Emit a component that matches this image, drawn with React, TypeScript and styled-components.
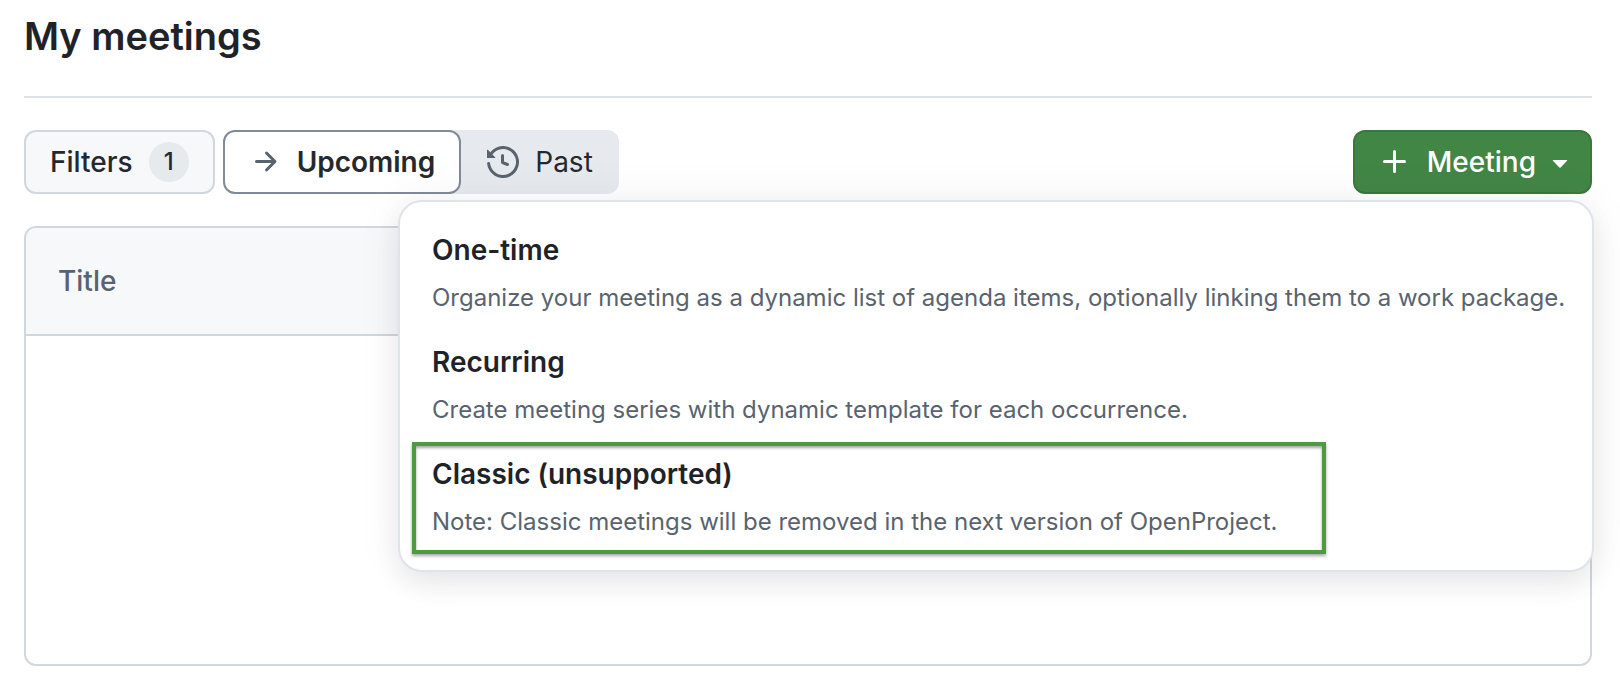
import React from "react";
import styled, { createGlobalStyle } from "styled-components";

const GlobalStyle = createGlobalStyle`
  *, *::before, *::after { box-sizing: border-box; }
  body {
    margin: 0;
    background: #ffffff;
    color: #1f2328;
    font-family: Inter, "Liberation Sans", sans-serif;
    font-size: 28px;
    line-height: 40px;
  }
`;

const Page = styled.main`
  padding: 4px 28px 32px 24px;
`;

const PageHeader = styled.header`
  padding-bottom: 28px;
  border-bottom: 2px solid #dfe3e8;
`;

const PageTitle = styled.h1`
  margin: 0;
  font-size: 38px;
  line-height: 64px;
  font-weight: 600;
`;

const Toolbar = styled.div`
  position: relative;
  display: flex;
  align-items: center;
  gap: 8px;
  padding: 32px 0;
`;

const Button = styled.button`
  display: inline-flex;
  align-items: center;
  gap: 16px;
  height: 64px;
  padding: 0 24px;
  border: 2px solid #d0d7de;
  border-radius: 12px;
  background: #f6f8fa;
  color: #25292e;
  font: inherit;
  font-weight: 500;
`;

const PrimaryButton = styled(Button)`
  margin-left: auto;
  border-color: #3b783e;
  background: #428646;
  color: #ffffff;
  gap: 8px;
  padding: 0 14px 0 24px;
`;

const ButtonLabel = styled.span`
  padding-left: 8px;
`;

const Counter = styled.span`
  width: 40px;
  height: 40px;
  border-radius: 20px;
  background: #e7eaed;
  font-size: 24px;
  text-align: center;
`;

const Segments = styled.div`
  display: flex;
  border-radius: 12px;
  background: #e6eaef;
`;

const Segment = styled.button<{ $selected?: boolean }>`
  display: inline-flex;
  align-items: center;
  gap: 16px;
  height: 64px;
  padding: 0 24px;
  border: 2px solid ${(p) => (p.$selected ? "#818b98" : "transparent")};
  border-radius: 12px;
  background: ${(p) => (p.$selected ? "#ffffff" : "transparent")};
  color: #25292e;
  font: inherit;
  font-weight: ${(p) => (p.$selected ? 600 : 400)};

  svg { color: #59636e; }
`;

const Icon = styled.svg`
  flex: none;
  width: 32px;
  height: 32px;
  fill: currentColor;
`;

const Menu = styled.ul`
  position: absolute;
  top: 102px;
  right: -2px;
  z-index: 1;
  width: 1196px;
  margin: 0;
  padding: 16px;
  list-style: none;
  border: 2px solid #dfe4ea;
  border-radius: 24px;
  background: #ffffff;
  box-shadow: 0 12px 24px rgba(37, 41, 46, 0.08), 0 0 48px rgba(37, 41, 46, 0.06);
`;

const MenuItem = styled.li`
  position: relative;
`;

const MenuAction = styled.button`
  display: flex;
  flex-direction: column;
  gap: 8px;
  width: 100%;
  padding: 12px 16px;
  border: 0;
  background: transparent;
  color: inherit;
  font: inherit;
  text-align: left;
  white-space: nowrap;
`;

const MenuLabel = styled.span`
  font-weight: 600;
`;

const MenuDescription = styled.span`
  color: #59636e;
  font-size: 24px;
`;

const Highlight = styled.span`
  position: absolute;
  inset: 0 250px 0 -4px;
  border: 4px solid #4f9a40;
  box-shadow: 0 2px 3px rgba(0, 0, 0, 0.35), inset 0 2px 3px rgba(0, 0, 0, 0.35);
  pointer-events: none;
`;

const TableBox = styled.div`
  overflow: hidden;
  border: 2px solid #d0d7de;
  border-radius: 12px;
`;

const Table = styled.table`
  width: 100%;
  border-collapse: separate;
  border-spacing: 0;
`;

const HeaderCell = styled.th`
  height: 108px;
  padding: 0 32px;
  border-bottom: 2px solid #d0d7de;
  background: #f6f8fa;
  color: #59636e;
  font-weight: 500;
  text-align: left;
`;

const EmptyRow = styled.tr`
  background: #f6f8fa;
`;

const EmptyCell = styled.td`
  height: 328px;
  padding: 0;
  border-radius: 12px;
  background: #ffffff;
`;

const paths = {
  arrow:
    "M8.22 2.97a.75.75 0 0 1 1.06 0l4.25 4.25a.75.75 0 0 1 0 1.06l-4.25 4.25a.751.751 0 0 1-1.042-.018.751.751 0 0 1-.018-1.042l2.97-2.97H3.75a.75.75 0 0 1 0-1.5h7.44L8.22 4.03a.75.75 0 0 1 0-1.06Z",
  history:
    "m.427 1.927 1.215 1.215a8.002 8.002 0 1 1-1.6 5.685.75.75 0 1 1 1.493-.154 6.5 6.5 0 1 0 1.18-4.458l1.358 1.358A.25.25 0 0 1 3.896 6H.25A.25.25 0 0 1 0 5.75V2.104a.25.25 0 0 1 .427-.177ZM7.75 4a.75.75 0 0 1 .75.75v2.992l2.028.812a.75.75 0 0 1-.557 1.392l-2.5-1A.751.751 0 0 1 7 8.25v-3.5A.75.75 0 0 1 7.75 4Z",
  plus: "M7.75 2a.75.75 0 0 1 .75.75V7h4.25a.75.75 0 0 1 0 1.5H8.5v4.25a.75.75 0 0 1-1.5 0V8.5H2.75a.75.75 0 0 1 0-1.5H7V2.75A.75.75 0 0 1 7.75 2Z",
  caret:
    "m4.427 7.427 3.396 3.396a.25.25 0 0 0 .354 0l3.396-3.396A.25.25 0 0 0 11.396 7H4.604a.25.25 0 0 0-.177.427Z",
};

function Glyph({ name }: { name: keyof typeof paths }) {
  return (
    <Icon viewBox="0 0 16 16" aria-hidden="true">
      <path d={paths[name]} />
    </Icon>
  );
}

const meetingTypes = [
  {
    label: "One-time",
    description:
      "Organize your meeting as a dynamic list of agenda items, optionally linking them to a work package.",
  },
  {
    label: "Recurring",
    description: "Create meeting series with dynamic template for each occurrence.",
  },
  {
    label: "Classic (unsupported)",
    description: "Note: Classic meetings will be removed in the next version of OpenProject.",
    highlighted: true,
  },
];

export default function App() {
  return (
    <>
      <GlobalStyle />
      <Page>
        <PageHeader>
          <PageTitle>My meetings</PageTitle>
        </PageHeader>
        <Toolbar>
          <Button type="button">
            Filters <Counter>1</Counter>
          </Button>
          <Segments>
            <Segment type="button" $selected aria-pressed="true">
              <Glyph name="arrow" />
              Upcoming
            </Segment>
            <Segment type="button" aria-pressed="false">
              <Glyph name="history" />
              Past
            </Segment>
          </Segments>
          <PrimaryButton type="button" aria-haspopup="menu" aria-expanded="true">
            <Glyph name="plus" />
            <ButtonLabel>Meeting</ButtonLabel>
            <Glyph name="caret" />
          </PrimaryButton>
          <Menu role="menu">
            {meetingTypes.map((type) => (
              <MenuItem key={type.label} role="none">
                <MenuAction type="button" role="menuitem">
                  <MenuLabel>{type.label}</MenuLabel>
                  <MenuDescription>{type.description}</MenuDescription>
                </MenuAction>
                {type.highlighted && <Highlight />}
              </MenuItem>
            ))}
          </Menu>
        </Toolbar>
        <TableBox>
          <Table>
            <thead>
              <tr>
                <HeaderCell scope="col">Title</HeaderCell>
              </tr>
            </thead>
            <tbody>
              <EmptyRow>
                <EmptyCell />
              </EmptyRow>
            </tbody>
          </Table>
        </TableBox>
      </Page>
    </>
  );
}
